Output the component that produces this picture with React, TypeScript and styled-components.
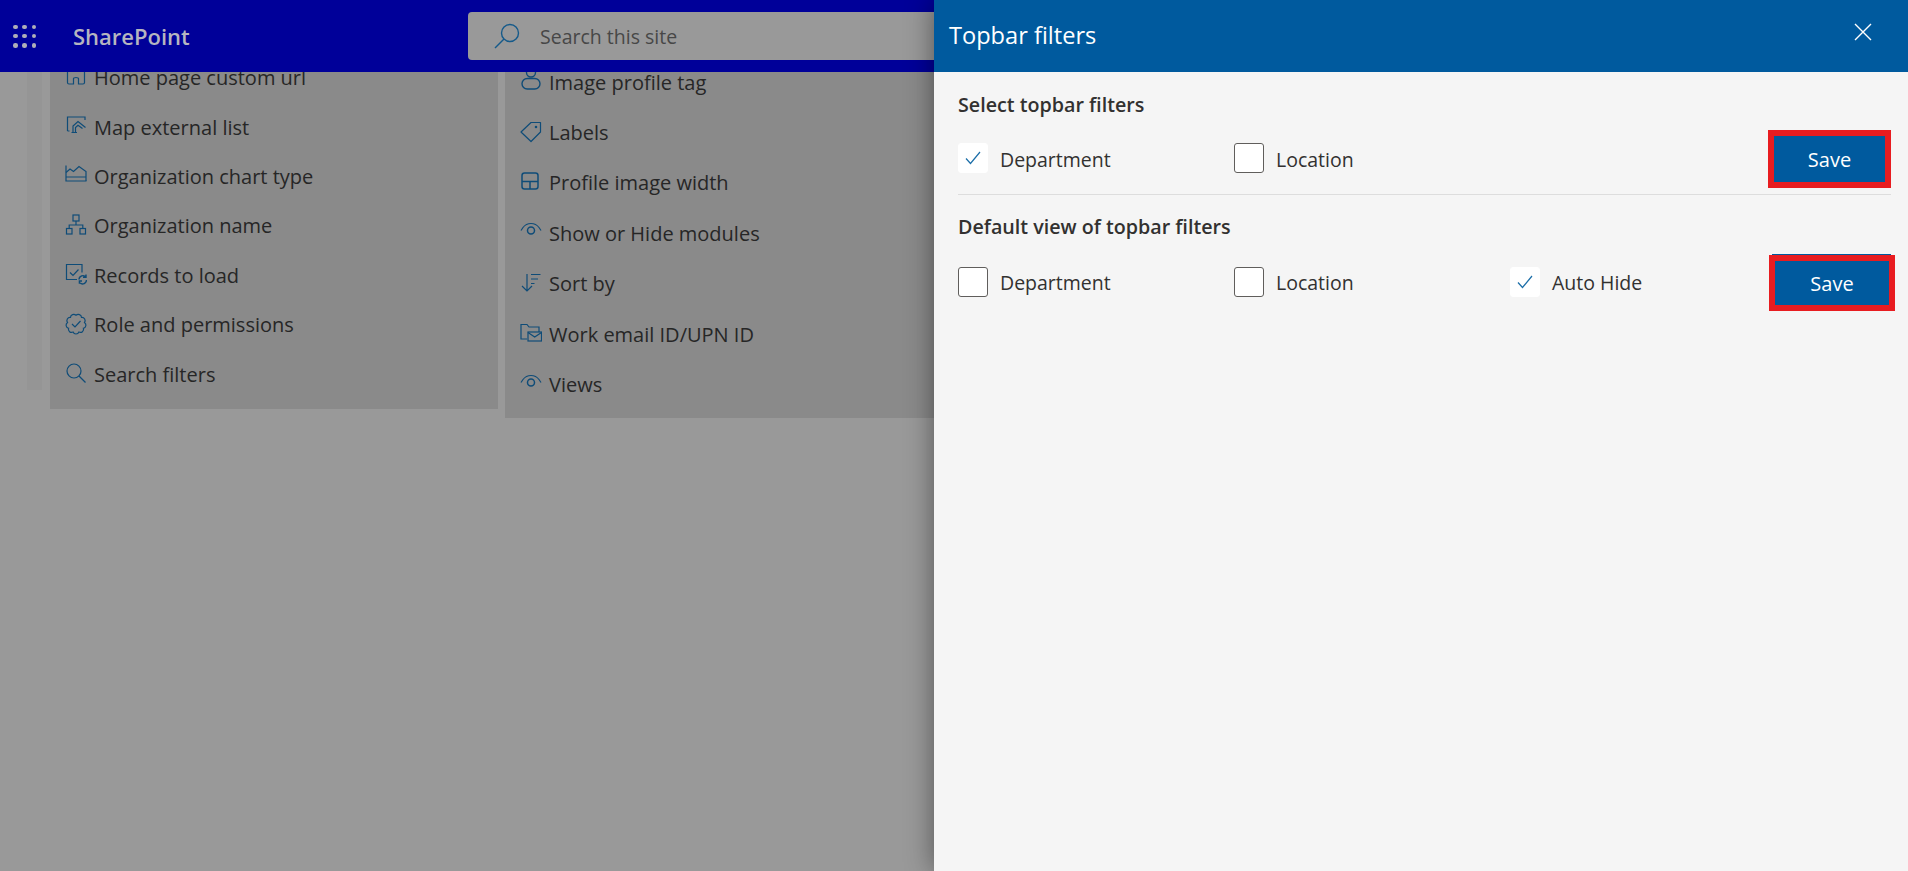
import React from "react";
import styled, { createGlobalStyle } from "styled-components";

const GlobalStyle = createGlobalStyle`
  html, body { margin: 0; padding: 0; height: 100%; overflow: hidden; }
  body { font-family: "Open Sans", "Noto Sans", sans-serif; background: #999999; }
  #root { height: 100%; }
`;

const Page = styled.div`
  display: flex;
  width: 1908px;
  height: 871px;
  overflow: hidden;
  background: #999999;
`;

const Main = styled.div`
  flex: 1;
  min-width: 0;
  display: flex;
  flex-direction: column;
`;

const TopBar = styled.header`
  position: relative;
  z-index: 1;
  flex: none;
  height: 72px;
  display: flex;
  align-items: center;
  background: #000099;
`;

const Waffle = styled.div`
  width: 23px;
  height: 23px;
  margin-left: 13px;
  display: grid;
  grid-template-columns: repeat(3, 4.5px);
  grid-template-rows: repeat(3, 4.5px);
  justify-content: space-between;
  align-content: space-between;
  span {
    border-radius: 50%;
    background: #aeaeb8;
  }
`;

const Brand = styled.div`
  margin-left: 37px;
  width: 395px;
  font-size: 22px;
  font-weight: 600;
  color: #b5b5c0;
`;

const SearchBox = styled.div`
  flex: 1;
  height: 48px;
  display: flex;
  align-items: center;
  padding-left: 26px;
  border-radius: 4px 0 0 4px;
  background: #999999;
  font-size: 19.5px;
  color: #474747;
  svg {
    margin-right: 20px;
  }
`;

const Body = styled.div`
  flex: 1;
  display: flex;
  align-items: flex-start;
  padding-left: 27px;
`;

const Strip = styled.div`
  flex: none;
  width: 15px;
  height: 318px;
  margin-right: 8px;
  background: #959595;
`;

const Card = styled.section<{ $width?: number; $gap?: number; $pad: number }>`
  flex: ${(p) => (p.$width ? "none" : "1")};
  width: ${(p) => (p.$width ? `${p.$width}px` : "auto")};
  margin-right: ${(p) => p.$gap ?? 0}px;
  overflow: hidden;
  padding-bottom: ${(p) => p.$pad}px;
  background: #8a8a8a;
`;

const List = styled.ul<{ $offset: number; $pitch: number; $inset: number }>`
  list-style: none;
  margin: ${(p) => p.$offset}px 0 0;
  padding: 0 0 0 ${(p) => p.$inset}px;
  display: grid;
  grid-auto-rows: ${(p) => p.$pitch}px;
`;

const Row = styled.li`
  display: flex;
  align-items: center;
  gap: 7px;
  font-size: 20px;
  color: #262626;
  svg {
    flex: none;
    position: relative;
    top: -1px;
    fill: none;
    stroke: #0f4c78;
    stroke-width: 1.2;
  }
`;

const Panel = styled.aside`
  position: relative;
  z-index: 2;
  flex: none;
  width: 974px;
  background: #f5f5f5;
  box-shadow: 0 0 26px rgba(0, 0, 0, 0.45);
`;

const PanelHeader = styled.div`
  height: 72px;
  display: flex;
  align-items: center;
  justify-content: space-between;
  padding: 0 36px 2px 15px;
  box-sizing: border-box;
  background: #005a9e;
  color: #ffffff;
  font-size: 23.6px;
`;

const CloseButton = styled.button`
  padding: 0;
  border: 0;
  background: none;
  color: #ffffff;
  display: flex;
  margin-top: -6px;
`;

const PanelBody = styled.div`
  padding: 0 17px 0 24px;
`;

const SectionTitle = styled.h3<{ $top: number }>`
  margin: ${(p) => p.$top}px 0 0;
  font-size: 19.7px;
  line-height: 24px;
  font-weight: 600;
  color: #323130;
`;

const FilterRow = styled.div<{ $top: number; $bleed?: number }>`
  display: flex;
  align-items: center;
  margin: ${(p) => p.$top}px ${(p) => -(p.$bleed ?? 0)}px 0 0;
`;

const CheckLabel = styled.label`
  flex: none;
  width: 276px;
  display: flex;
  align-items: center;
  gap: 12px;
  font-size: 19.5px;
  color: #323130;
  & + & + & {
    width: auto;
  }
`;

const LabelText = styled.span`
  padding-top: 2px;
`;

const CheckBox = styled.span<{ $checked?: boolean }>`
  flex: none;
  box-sizing: border-box;
  width: 30px;
  height: 30px;
  display: flex;
  align-items: center;
  justify-content: center;
  border-radius: 3px;
  background: #ffffff;
  border: 1px solid ${(p) => (p.$checked ? "#ffffff" : "#605e5c")};
`;

const SaveButton = styled.button<{ $width: number; $height: number; $drop: number; $lip?: boolean }>`
  position: relative;
  flex: none;
  margin: ${(p) => p.$drop}px 0 0 auto;
  box-sizing: border-box;
  width: ${(p) => p.$width}px;
  height: ${(p) => p.$height}px;
  border: 6px solid #e81c20;
  background: #005a9e;
  color: #ffffff;
  font-family: inherit;
  font-size: 20px;
  padding: 0;
  &::before {
    content: "";
    display: ${(p) => (p.$lip ? "block" : "none")};
    position: absolute;
    top: -7px;
    left: -3px;
    right: -2px;
    height: 1px;
    background: #005a9e;
  }
`;

const Divider = styled.hr`
  margin: 6px 0 0;
  border: 0;
  border-top: 1px solid #dddddd;
  height: 0;
`;

const Check = () => (
  <svg width="16" height="14" viewBox="0 0 16 14" fill="none" stroke="#1b6ea8" strokeWidth="1.2">
    <path d="M1 7.5 5.5 12.5 15 1" />
  </svg>
);

// scalloped outline of the permissions badge
const badge = (() => {
  const n = 9;
  const pts = Array.from({ length: n }, (_, i) => {
    const a = (i / n) * Math.PI * 2 - Math.PI / 2;
    return `${(11 + 8.6 * Math.cos(a)).toFixed(2)} ${(11 + 8.6 * Math.sin(a)).toFixed(2)}`;
  });
  return `M${pts[0]} ` + pts.slice(1).concat(pts[0]).map((p) => `A3.2 3.2 0 0 1 ${p}`).join(" ");
})();

const icons: Record<string, React.ReactNode> = {
  home: <path d="M2.5 4V16.5Q2.5 18 4 18H8.5V12.5Q8.5 11.5 11 11.5 13.5 11.5 13.5 12.5V18H18Q19.5 18 19.5 16.5V4" />,
  map: (
    <>
      <path d="M2.5 16V2H20V5M2.5 16H4.5" />
      <path d="M8 17.5V11L13 6.5 20.5 12.5M10.5 17.5V12.5L13 10.2 17.5 13.5M6.5 17.5H12" />
    </>
  ),
  chart: (
    <>
      <path d="M1 1.5V17H21.5" />
      <path d="M1 8.5 5 5 8.5 7.5 14 2.5 21 7.5V17M1 13H21" />
    </>
  ),
  org: (
    <>
      <rect x="8" y="1" width="6" height="6" />
      <rect x="1.5" y="14.5" width="5.5" height="5.5" />
      <rect x="15" y="14.5" width="5.5" height="5.5" />
      <path d="M11 7V11M4.2 14.5V11H17.8V14.5" />
    </>
  ),
  records: (
    <>
      <path d="M12 16.5H1.5V1.5H17V9.5" />
      <path d="M5 9.5 8 12.5 13.5 6.5" />
      <path d="M14 16.5A4 4 0 0 1 21 14M21.5 17A4 4 0 0 1 15 20M21 11.5V14.3H18M14.4 20.8V18H17" strokeWidth="1.4" />
    </>
  ),
  role: (
    <>
      <path d={badge} />
      <path d="M7 11 10 14 15.5 8" />
    </>
  ),
  search: (
    <>
      <circle cx="9" cy="9" r="7" />
      <path d="M14 14 20.5 20.5" />
    </>
  ),
  person: (
    <>
      <path d="M6.5 1V2.5A4.5 4.5 0 0 0 15.5 2.5V1" strokeWidth="1.4" />
      <rect x="2" y="8.5" width="18" height="10.5" rx="5.25" strokeWidth="1.4" />
    </>
  ),
  tag: (
    <>
      <path d="M1 11 11 1.5H20.5V11L11 20.5Z" strokeLinejoin="round" />
      <circle cx="16" cy="6" r="0.7" />
    </>
  ),
  layout: (
    <>
      <rect x="2" y="2" width="16" height="16" rx="2.5" strokeWidth="1.5" />
      <path d="M2 10.5H18M10 10.5V18" strokeWidth="1.5" />
    </>
  ),
  eye: (
    <>
      <path d="M1 9.5 3 6.5A10 10 0 0 1 19 6.5L21 9.5" />
      <circle cx="11" cy="9.5" r="3.5" strokeWidth="1.5" />
    </>
  ),
  sort: (
    <>
      <path d="M7 2V19M2 14 7 19 12 14" />
      <path d="M11 2.5H20.5M11 7H18M11 11.5H14.5" />
    </>
  ),
  mail: (
    <>
      <path d="M7 17H1V2.5H7L9 5H19V10" />
      <rect x="8" y="10" width="13.5" height="9" />
      <path d="M8 10.5 14.7 15 21.5 10.5" />
    </>
  ),
};

const leftItems: [string, string][] = [
  ["home", "Home page custom url"],
  ["map", "Map external list"],
  ["chart", "Organization chart type"],
  ["org", "Organization name"],
  ["records", "Records to load"],
  ["role", "Role and permissions"],
  ["search", "Search filters"],
];

const rightItems: [string, string][] = [
  ["person", "Image profile tag"],
  ["tag", "Labels"],
  ["layout", "Profile image width"],
  ["eye", "Show or Hide modules"],
  ["sort", "Sort by"],
  ["mail", "Work email ID/UPN ID"],
  ["eye", "Views"],
];

const SettingRow = ({ icon, label }: { icon: string; label: string }) => (
  <Row>
    <svg width="22" height="22" viewBox="0 0 22 22">
      {icons[icon]}
    </svg>
    {label}
  </Row>
);

const Filter = ({ label, checked }: { label: string; checked?: boolean }) => (
  <CheckLabel>
    <CheckBox $checked={checked}>{checked && <Check />}</CheckBox>
    <LabelText>{label}</LabelText>
  </CheckLabel>
);

export default function App() {
  return (
    <Page>
      <GlobalStyle />
      <Main>
        <TopBar>
          <Waffle>
            {Array.from({ length: 9 }, (_, i) => (
              <span key={i} />
            ))}
          </Waffle>
          <Brand>SharePoint</Brand>
          <SearchBox>
            <svg width="26" height="26" viewBox="0 0 26 26" fill="none" stroke="#155a8a" strokeWidth="1.4">
              <circle cx="16" cy="10" r="8.5" />
              <path d="M10 16 1 25" />
            </svg>
            Search this site
          </SearchBox>
        </TopBar>
        <Body>
          <Strip />
          <Card $width={448} $gap={7} $pad={10}>
            <List $offset={-19} $pitch={49.4} $inset={15}>
              {leftItems.map(([icon, label]) => (
                <SettingRow key={label} icon={icon} label={label} />
              ))}
            </List>
          </Card>
          <Card $pad={8}>
            <List $offset={-15} $pitch={50.4} $inset={15}>
              {rightItems.map(([icon, label]) => (
                <SettingRow key={label} icon={icon} label={label} />
              ))}
            </List>
          </Card>
        </Body>
      </Main>
      <Panel>
        <PanelHeader>
          Topbar filters
          <CloseButton aria-label="Close">
            <svg width="18" height="18" viewBox="0 0 18 18" fill="none" stroke="currentColor" strokeWidth="1.4">
              <path d="M1 1 17 17M17 1 1 17" />
            </svg>
          </CloseButton>
        </PanelHeader>
        <PanelBody>
          <SectionTitle $top={21}>Select topbar filters</SectionTitle>
          <FilterRow $top={11}>
            <Filter label="Department" checked />
            <Filter label="Location" />
            <SaveButton $width={123} $height={58} $drop={2}>Save</SaveButton>
          </FilterRow>
          <Divider />
          <SectionTitle $top={20}>Default view of topbar filters</SectionTitle>
          <FilterRow $top={13} $bleed={4}>
            <Filter label="Department" />
            <Filter label="Location" />
            <Filter label="Auto Hide" checked />
            <SaveButton $width={126} $height={56} $drop={3} $lip>Save</SaveButton>
          </FilterRow>
        </PanelBody>
      </Panel>
    </Page>
  );
}
